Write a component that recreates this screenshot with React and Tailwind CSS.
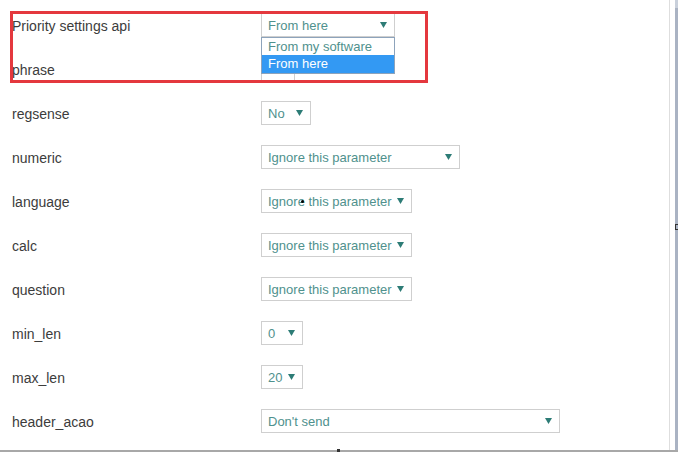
import React from 'react'

const rows = [
  { label: 'Priority settings api', value: 'From here', width: 'w-[134px]' },
  { label: 'phrase', value: '', width: 'w-[34px]' },
  { label: 'regsense', value: 'No', width: 'w-[50px]' },
  { label: 'numeric', value: 'Ignore this parameter', width: 'w-[199px]' },
  { label: 'language', value: 'Ignore this parameter', width: 'w-[151px]', cursor: true },
  { label: 'calc', value: 'Ignore this parameter', width: 'w-[151px]' },
  { label: 'question', value: 'Ignore this parameter', width: 'w-[151px]' },
  { label: 'min_len', value: '0', width: 'w-[42px]' },
  { label: 'max_len', value: '20', width: 'w-[42px]' },
  { label: 'header_acao', value: "Don't send", width: 'w-[299px]' },
]

function Arrow() {
  return (
    <svg width="7" height="6" viewBox="0 0 7 6" className="shrink-0">
      <polygon points="0,0 7,0 3.5,6" fill="#2d7c76" />
    </svg>
  )
}

function FakeSelect({ value, width, cursor }) {
  return (
    <div className={`relative flex h-[24px] ${width} items-center justify-between border border-[#cfcfcf] bg-white pl-[6px] pr-[7px] text-[13px] text-[#4f918d]`}>
      <span className="whitespace-nowrap leading-none">{value}</span>
      {value && <Arrow />}
      {cursor && <span className="absolute left-[39px] top-[10px] h-[3px] w-[3px] rounded-full bg-black" />}
    </div>
  )
}

export default function App() {
  return (
    <div className="relative h-[452px] w-[678px] overflow-hidden bg-white font-['Liberation_Sans',Arial,sans-serif]">
      <div className="flex h-[450px]">
        {/* form */}
        <div className="w-[669px] pt-[3px]">
          {rows.map((r) => (
            <div key={r.label} className="flex h-[44px] items-center">
              <div className="w-[261px] pl-[12px] pt-[2px] text-[14px] text-[#3c3c3c]">{r.label}</div>
              <FakeSelect value={r.value} width={r.width} cursor={r.cursor} />
            </div>
          ))}
        </div>
        <div className="w-[1px] bg-[#dedede]" />
        <div className="w-[5px]" />
        <div className="relative flex w-[3px] flex-col">
          <div className="h-[8px] bg-[#c9d0db]" />
          <div className="flex-1 bg-[#aab3c3]" />
          <span className="absolute left-0 top-[224px] h-[6px] w-[3px] border border-r-0 border-[#333]" />
        </div>
      </div>
      <div className="h-[2px] bg-[#a8a8a8]" />
      <span className="absolute bottom-0 left-[337px] h-[3px] w-[3px] bg-[#333]" />

      {/* open dropdown list */}
      <div className="absolute left-[261px] top-[37px] w-[134px] border border-[#8da3bb] bg-white text-[13px]">
        <div className="h-[17px] pl-[6px] leading-[18px] text-[#4f918d]">From my software</div>
        <div className="h-[18px] bg-[#3399f3] pl-[6px] leading-[18px] text-white">From here</div>
      </div>

      {/* red annotation box */}
      <div className="absolute left-[10px] top-[11px] h-[72px] w-[418px] border-[3px] border-[#e4383e]" />
    </div>
  )
}
